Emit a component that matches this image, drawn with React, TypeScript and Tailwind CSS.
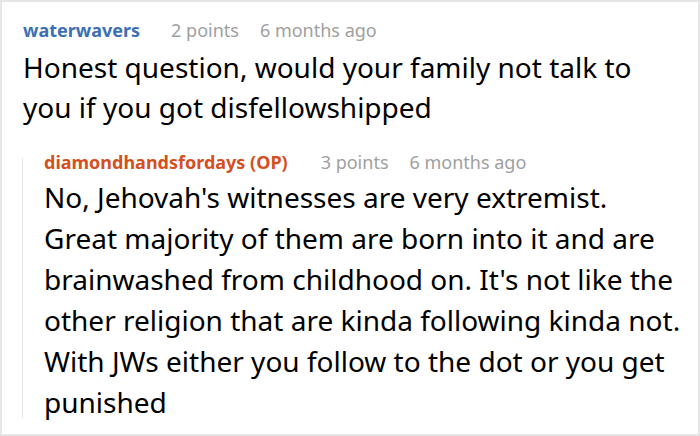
export default function App() {
  return (
    <div className="w-[700px] h-[436px] bg-white border-2 border-[#e6e6e6] font-['Noto_Sans',sans-serif] overflow-hidden">
      <div className="pl-[21px] pt-[15px]">
        <div className="flex items-baseline text-[18px] leading-[26px]">
          <span className="font-bold text-[#3d6fb6]">waterwavers</span>
          <span className="ml-[31px] text-[#a0a0a0]">2 points</span>
          <span className="ml-[21px] text-[#a0a0a0]">6 months ago</span>
        </div>
        <p className="mt-[4px] w-[647px] text-[28px] leading-[40px] text-black">
          Honest question, would your family not talk to you if you got disfellowshipped
        </p>
        <div className="mt-[22px] flex">
          <div className="-ml-[1px] w-[1px] bg-[#e3e3e3] mt-[9px] mb-[5px]" />
          <div className="pl-[21px]">
            <div className="flex items-baseline text-[18px] leading-[26px]">
              <span className="font-bold text-[#d4501e]">diamondhandsfordays (OP)</span>
              <span className="ml-[33px] text-[#a0a0a0]">3 points</span>
              <span className="ml-[21px] text-[#a0a0a0]">6 months ago</span>
            </div>
            <p className="mt-[2px] w-[641px] text-[28px] leading-[41px] text-black">
              No, Jehovah's witnesses are very extremist. Great majority of them are born into it and are brainwashed from childhood on. It's not like the other religion that are kinda following kinda not. With JWs either you follow to the dot or you get punished
            </p>
          </div>
        </div>
      </div>
    </div>
  );
}
